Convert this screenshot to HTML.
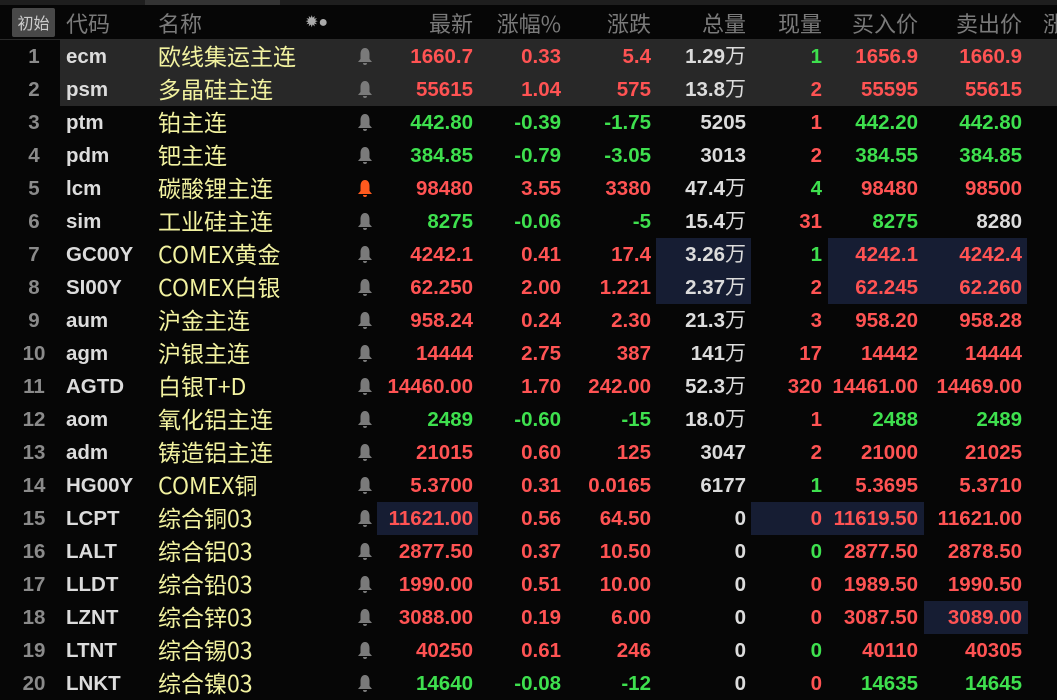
<!DOCTYPE html><html><head><meta charset="utf-8"><style>
body{margin:0;width:1057px;height:700px;background:#060606;overflow:hidden;position:relative;font-family:"Liberation Sans","Noto Sans CJK SC",sans-serif}
.a{position:absolute;white-space:nowrap}
.h{color:#7a7a7a;font-size:22px;top:7px;line-height:32px;font-family:"Noto Sans CJK SC",sans-serif}
.c{font-size:20.5px;font-weight:bold;line-height:33px}
.r{color:#ff5353}.g{color:#3ee04e}.w{color:#dcdcdc}
.n{color:#f2f2a0;font-size:23px;font-family:"Noto Sans CJK SC",sans-serif;line-height:33px}
.hl{position:absolute;background:#161d33}
</style></head><body>
<div class="a" style="left:0;top:0;width:1057px;height:5px;background:#1e1e1e"></div>
<div class="a" style="left:145px;top:0;width:135px;height:5px;background:#333"></div>
<div class="a" style="left:12px;top:8px;width:43px;height:29px;background:#484848;border-radius:2px;color:#ccc;font-size:16px;line-height:29px;text-align:center;font-family:'Noto Sans CJK SC',sans-serif">初始</div>
<div class="a" style="left:0;top:39px;width:1057px;height:1px;background:#2a2a2a"></div>
<div class="a" style="left:60px;top:40px;width:997px;height:66px;background:#282828"></div>
<div class="hl" style="left:656px;top:238px;width:95px;height:66px"></div>
<div class="hl" style="left:828px;top:238px;width:199px;height:66px"></div>
<div class="hl" style="left:377px;top:502px;width:101px;height:33px"></div>
<div class="hl" style="left:751px;top:502px;width:173px;height:33px"></div>
<div class="hl" style="left:924px;top:601px;width:104px;height:33px"></div>
<div id="t"></div>
<script>
var H=[["代码",66,0],["名称",158,0],["最新",473,1],["涨幅%",561,1],["涨跌",651,1],["总量",746,1],["现量",822,1],["买入价",918,1],["卖出价",1022,1],["涨",1043,0]];
var s='';
H.forEach(function(h){s+='<div class="a h" style="'+(h[2]?'right:'+(1057-h[1]):'left:'+h[1])+'px">'+h[0]+'</div>';});
s+='<div class="a" style="left:305px;top:12px;color:#aaa;font-size:16px">✹●</div>';
var D=[
["ecm","欧线集运主连","1660.7","0.33","5.4","1.29万","1","1656.9","1660.9","rrrgrr"],
["psm","多晶硅主连","55615","1.04","575","13.8万","2","55595","55615","rrrrrr"],
["ptm","铂主连","442.80","-0.39","-1.75","5205","1","442.20","442.80","gggrgg"],
["pdm","钯主连","384.85","-0.79","-3.05","3013","2","384.55","384.85","gggrgg"],
["lcm","碳酸锂主连","98480","3.55","3380","47.4万","4","98480","98500","rrrgrr"],
["sim","工业硅主连","8275","-0.06","-5","15.4万","31","8275","8280","gggrgw"],
["GC00Y","COMEX黄金","4242.1","0.41","17.4","3.26万","1","4242.1","4242.4","rrrgrr"],
["SI00Y","COMEX白银","62.250","2.00","1.221","2.37万","2","62.245","62.260","rrrrrr"],
["aum","沪金主连","958.24","0.24","2.30","21.3万","3","958.20","958.28","rrrrrr"],
["agm","沪银主连","14444","2.75","387","141万","17","14442","14444","rrrrrr"],
["AGTD","白银T+D","14460.00","1.70","242.00","52.3万","320","14461.00","14469.00","rrrrrr"],
["aom","氧化铝主连","2489","-0.60","-15","18.0万","1","2488","2489","gggrgg"],
["adm","铸造铝主连","21015","0.60","125","3047","2","21000","21025","rrrrrr"],
["HG00Y","COMEX铜","5.3700","0.31","0.0165","6177","1","5.3695","5.3710","rrrgrr"],
["LCPT","综合铜03","11621.00","0.56","64.50","0","0","11619.50","11621.00","rrrrrr"],
["LALT","综合铝03","2877.50","0.37","10.50","0","0","2877.50","2878.50","rrrgrr"],
["LLDT","综合铅03","1990.00","0.51","10.00","0","0","1989.50","1990.50","rrrrrr"],
["LZNT","综合锌03","3088.00","0.19","6.00","0","0","3087.50","3089.00","rrrrrr"],
["LTNT","综合锡03","40250","0.61","246","0","0","40110","40305","rrrgrr"],
["LNKT","综合镍03","14640","-0.08","-12","0","0","14635","14645","gggrgg"]];
var R=[473,561,651,746,822,918,1022];
D.forEach(function(d,i){var y=40+i*33;
s+='<div class="a c" style="top:'+y+'px;width:40px;left:14px;text-align:center;color:#8a8a8a">'+(i+1)+'</div>';
s+='<div class="a c w" style="top:'+y+'px;left:66px">'+d[0]+'</div>';
s+='<div class="a n" style="top:'+(y-1)+'px;left:158px">'+d[1]+'</div>';
s+='<div class="a" style="top:'+(y+7)+'px;left:357px"><svg width="16" height="19" viewBox="0 0 16 19"><path d="M8 1C4.5 1 3.5 4.5 3.5 7v5L1 15h14l-2.5-3V7C12.5 4.5 11.5 1 8 1zM6 16a2 2 0 004 0z" fill="'+(i==4?'#ff5a1e':'#7a7a7a')+'"/></svg></div>';
var cols=d[9];
[2,3,4].forEach(function(k,j){s+='<div class="a c '+cols[0]+'" style="top:'+y+'px;right:'+(1057-R[j])+'px">'+d[k]+'</div>';});
var v=d[5],u='';if(v.slice(-1)=='万'){u='<span style="font-weight:normal;font-size:21px;line-height:0;font-family:\'Noto Sans CJK SC\'">万</span>';v=v.slice(0,-1);}
s+='<div class="a c w" style="top:'+y+'px;right:'+(1057-R[3])+'px">'+v+u+'</div>';
s+='<div class="a c '+cols[3]+'" style="top:'+y+'px;right:'+(1057-R[4])+'px">'+d[6]+'</div>';
s+='<div class="a c '+cols[4]+'" style="top:'+y+'px;right:'+(1057-R[5])+'px">'+d[7]+'</div>';
s+='<div class="a c '+cols[5]+'" style="top:'+y+'px;right:'+(1057-R[6])+'px">'+d[8]+'</div>';
});
document.getElementById('t').innerHTML=s;
</script></body></html>
